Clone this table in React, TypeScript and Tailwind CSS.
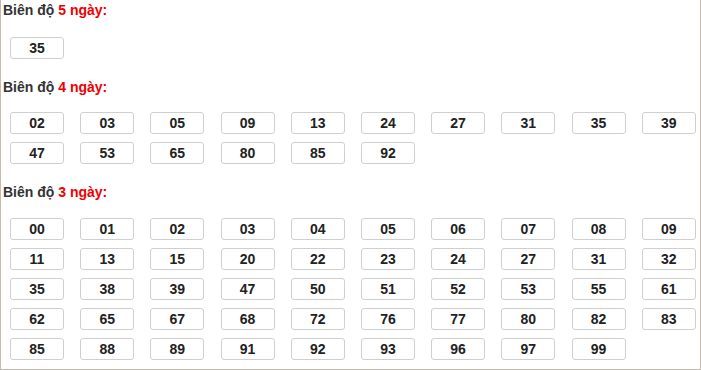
import React from "react";

const five = ["35"];
const four = ["02","03","05","09","13","24","27","31","35","39","47","53","65","80","85","92"];
const three = ["00","01","02","03","04","05","06","07","08","09","11","13","15","20","22","23","24","27","31","32","35","38","39","47","50","51","52","53","55","61","62","65","67","68","72","76","77","80","82","83","85","88","89","91","92","93","96","97","99"];

function Heading({ n }: { n: string }) {
  return (
    <div className="h-[20px] leading-[20px] pl-[2px] text-[14px] font-bold text-[#333333]">
      Biên độ <span className="text-[#ee0000]">{n} ngày:</span>
    </div>
  );
}

function Grid({ items, mt }: { items: string[]; mt: string }) {
  return (
    <div className={`grid grid-cols-[repeat(10,54px)] gap-x-[16.2px] gap-y-[8px] pl-[9px] ${mt}`}>
      {items.map((x, i) => (
        <div
          key={i}
          className="h-[22px] leading-[20px] border border-[#cfcfcf] rounded-[3px] bg-white text-center text-[14px] font-bold text-[#222222]"
        >
          {x}
        </div>
      ))}
    </div>
  );
}

export default function App() {
  return (
    <div
      className="w-[701px] h-[370px] bg-white border-l border-r border-b border-[#c4bbae] pb-[9px]"
      style={{ fontFamily: '"Liberation Sans", Arial, sans-serif' }}
    >
      <Heading n="5" />
      <Grid items={five} mt="mt-[17px]" />
      <div className="mt-[18px]">
        <Heading n="4" />
      </div>
      <Grid items={four} mt="mt-[15px]" />
      <div className="mt-[18px]">
        <Heading n="3" />
      </div>
      <Grid items={three} mt="mt-[16px]" />
    </div>
  );
}
